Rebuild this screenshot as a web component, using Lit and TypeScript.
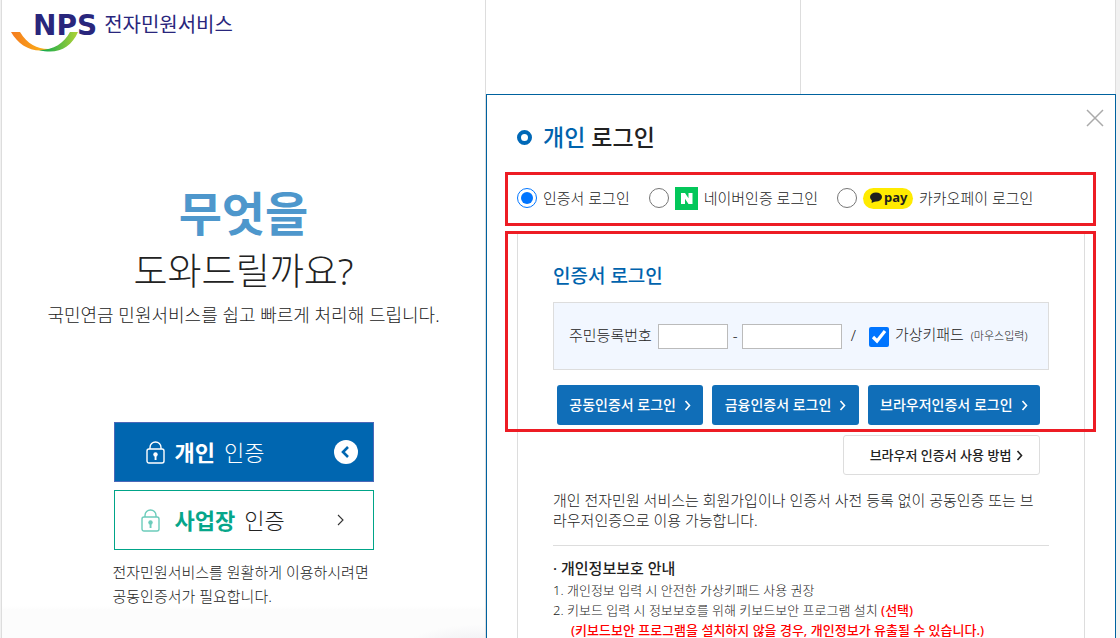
import { LitElement, html, css, svg } from "lit";
import { customElement, state } from "lit/decorators.js";

const chevron = svg`<path d="M1.5 1 L5.5 5.5 L1.5 10" fill="none" stroke="currentColor" stroke-width="1.6" />`;
const lock = svg`
  <rect x="1" y="8" width="17" height="14" rx="2" fill="none" stroke="currentColor" stroke-width="1.4" />
  <path d="M4 8 V6.5 A5.5 5.5 0 0 1 15 6.5 V8" fill="none" stroke="currentColor" stroke-width="1.4" />
  <circle cx="9.5" cy="13.4" r="2.2" fill="currentColor" />
  <rect x="8.6" y="14" width="1.9" height="5" fill="currentColor" />`;

@customElement("app-root")
export class AppRoot extends LitElement {
  @state() private method = "cert";

  static styles = css`
    :host {
      display: block;
      box-sizing: border-box;
      height: 100vh;
      overflow: hidden;
      background: #f1f1f1;
      color: #222;
      font: 300 15px/20px "Noto Sans", "Noto Sans CJK KR", sans-serif;
    }
    *, *::before, *::after { box-sizing: border-box; }
    h1, h2, h3, p, ol, fieldset { margin: 0; padding: 0; border: 0; font-size: inherit; font-weight: inherit; }
    button { font: inherit; cursor: pointer; }
    a { color: inherit; text-decoration: none; }
    svg { display: block; flex: none; }
    .page {
      display: grid;
      grid-template-columns: 483fr 631fr;
      height: 100%;
      margin: 0 4px 0 1px;
      background: #fff;
      border-left: 1px solid #ddd;
    }
    .intro {
      display: flex;
      flex-direction: column;
      align-items: center;
      background: radial-gradient(ellipse 88px 42px at 98% 101%, #d2d1d8, #e0dfe5 40%, #f4f4f6 70%, #fff0 100%),
        linear-gradient(#fff0 606px, #fcfcfc 610px);
    }
    .logo { display: flex; align-self: flex-start; padding: 10px 0 0 9px; height: 56px; color: #29267c; }
    .swoosh { margin: 20px -46px 0 0; }
    .nps { font: 700 28px/31px "DejaVu Sans", sans-serif; }
    .service { margin-left: 7px; font-size: 20px; line-height: 30px; font-weight: 400; }
    .big { margin-top: 125px; color: #4e97cc; font-size: 47px; line-height: 64px; font-weight: 700; }
    .help { font-size: 37px; line-height: 52px; }
    .lead { margin-top: 4px; font-size: 18px; line-height: 28px; white-space: nowrap; }
    .choices { display: grid; gap: 8px; width: 260px; margin-top: 93px; }
    .choice {
      display: flex;
      align-items: center;
      height: 60px;
      padding: 0 15px 0 31px;
      border: 1px solid #00a488;
      background: #fff;
      color: #222;
      font-size: 22px;
      line-height: 32px;
      font-weight: 300;
    }
    .choice b { margin: 0 9px 0 10px; font-weight: 700; }
    .choice svg:last-child { margin-left: auto; }
    .personal { border-color: #4b68b8; background: #0066b0; color: #fff; }
    .company { padding: 0 29px 0 26px; }
    .company b { margin-left: 15px; color: #06a68a; }
    .company .lock { color: #6cccbb; }
    .hint { width: 262px; margin-top: 10px; line-height: 24px; white-space: nowrap; }

    .side { display: grid; grid-template-rows: 94px 1fr; min-width: 0; border-left: 1px solid #ddd; }
    .tabs { display: grid; grid-template-columns: 1fr 1fr; }
    .tabs div { border-right: 1px solid #ddd; }
    .panel { min-height: 0; border: 1px solid #00629f; border-bottom: 0; padding: 0 19px 0 18px; overflow: hidden; }
    .head { display: flex; justify-content: space-between; height: 77px; padding: 14px 0 0 12px; }
    .title {
      display: flex;
      align-items: center;
      gap: 11px;
      height: 56px;
      font-size: 23px;
      line-height: 32px;
      font-weight: 500;
    }
    .title::before { content: ""; width: 15px; height: 15px; border: 4px solid #0068b7; border-radius: 50%; }
    .title em, .sub { color: #0063ad; font-style: normal; }
    .close { width: 18px; height: 18px; padding: 0; border: 0; background: none; color: #aaa; margin-right: -8px; }
    .methods {
      display: flex;
      align-items: center;
      height: 54px;
      padding: 0 9px 2px;
      border: 3px solid #ed1c24;
    }
    .methods label { display: flex; align-items: center; margin-right: 19px; white-space: nowrap; }
    input[type="radio"], input[type="checkbox"] { flex: none; width: 20px; height: 20px; margin: 0 6px 0 0; accent-color: #0075ff; }
    .mark { margin-right: 6px; }
    .naver { width: 23px; height: 23px; background: #03c75a; }
    .pay {
      display: flex;
      align-items: center;
      gap: 2px;
      width: 50px;
      height: 21px;
      padding: 0 0 2px 7px;
      border-radius: 11px;
      background: #ffeb00;
      color: #1e1e1e;
      font: 700 13px/18px "Noto Sans", sans-serif;
    }
    .frame { margin: 5px 11px 0 12px; border: 1px solid #ddd; border-width: 0 1px; padding: 0 35px 20px; }
    .cert { position: relative; height: 201px; padding-top: 31px; }
    .cert::after {
      content: "";
      position: absolute;
      inset: 0 -47px 0 -48px;
      border: 3px solid #ed1c24;
      pointer-events: none;
    }
    .sub { font-size: 19px; line-height: 28px; font-weight: 500; }
    .number {
      display: flex;
      align-items: center;
      height: 68px;
      margin-top: 12px;
      padding: 0 15px 2px;
      border: 1px solid #ddd;
      background: #f2f7ff;
      white-space: nowrap;
    }
    .number input[type="text"], .number input[type="password"] {
      width: 70px;
      height: 25px;
      margin: 3px 5px 0 6px;
      border: 1px solid #bbb;
      background: #fff;
    }
    .number input[type="password"] { width: 100px; margin: 3px 9px 0 4px; }
    .number input[type="checkbox"] { margin: 3px 6px 0 13px; }
    .number small { margin-left: 3px; font-size: 11px; }
    .logins { display: flex; gap: 9px; padding: 15px 9px 0 4px; }
    .login {
      display: flex;
      align-items: center;
      justify-content: center;
      gap: 8px;
      flex: 146 1 0;
      height: 40px;
      padding: 0;
      border: 0;
      border-radius: 3px;
      background: #106eb8;
      color: #fff;
      font-size: 14px;
      font-weight: 500;
      white-space: nowrap;
    }
    .login.wide { flex-grow: 172; }
    .guide {
      display: flex;
      align-items: center;
      justify-content: center;
      gap: 5px;
      width: 197px;
      height: 40px;
      margin: 3px 9px 0 auto;
      padding-left: 10px;
      border: 1px solid #ddd;
      border-radius: 3px;
      color: #222;
      font-size: 13px;
      font-weight: 500;
      white-space: nowrap;
    }
    .about { margin-top: 15px; padding-bottom: 15px; border-bottom: 1px solid #ddd; white-space: nowrap; }
    .privacy { margin-top: 12px; font-weight: 500; }
    .rules { list-style-position: inside; margin-top: 2px; font-size: 13px; white-space: nowrap; }
    .rules strong { color: #f00; font-weight: 500; }
    .rules .warn { display: block; padding-left: 18px; }
  `;

  private methodOption(id: string, label: string, mark: unknown = "") {
    return html`<label>
      <input type="radio" name="method" .checked=${this.method === id} @change=${() => (this.method = id)} />
      ${mark}${label}
    </label>`;
  }

  private arrow() {
    return html`<svg width="7" height="11" viewBox="0 0 7 11" aria-hidden="true">${chevron}</svg>`;
  }

  render() {
    return html`
      <div class="page">
        <main class="intro">
          <a class="logo" href="#">
            <svg class="swoosh" width="68" height="23" viewBox="0 0 68 23" aria-hidden="true">
              <defs>
                <linearGradient id="o"><stop stop-color="#f47b20" /><stop offset="1" stop-color="#fdb913" /></linearGradient>
                <linearGradient id="g"><stop stop-color="#00a651" /><stop offset="1" stop-color="#b2d235" /></linearGradient>
              </defs>
              <path d="M0 2 H9 C17 15 28 20 40 19 C22 24 8 16 0 2Z" fill="url(#o)" />
              <path d="M67 2 H59 C53 13 43 20 28 20 C46 25 60 18 67 2Z" fill="url(#g)" />
            </svg>
            <span class="nps">NPS</span><span class="service">전자민원서비스</span>
          </a>
          <h1 class="big">무엇을</h1>
          <p class="help">도와드릴까요?</p>
          <p class="lead">국민연금 민원서비스를 쉽고 빠르게 처리해 드립니다.</p>
          <div class="choices">
            <button class="choice personal">
              <svg width="19" height="23" viewBox="0 0 19 23" aria-hidden="true">${lock}</svg>
              <b>개인</b>인증
              <svg width="24" height="24" viewBox="0 0 24 24" aria-hidden="true">
                <circle cx="12" cy="12" r="12" fill="#fff" />
                <path d="M14 7 L9 12 L14 17" fill="none" stroke="#0066b0" stroke-width="2.6" />
              </svg>
            </button>
            <button class="choice company">
              <svg class="lock" width="19" height="23" viewBox="0 0 19 23" aria-hidden="true">${lock}</svg>
              <b>사업장</b>인증
              <svg width="7" height="12" viewBox="0 0 7 12" aria-hidden="true">
                <path d="M1 1 L6 6 L1 11" fill="none" stroke="#333" stroke-width="1.1" />
              </svg>
            </button>
          </div>
          <p class="hint">전자민원서비스를 원활하게 이용하시려면<br />공동인증서가 필요합니다.</p>
        </main>
        <div class="side">
          <div class="tabs"><div></div><div></div></div>
          <section class="panel">
            <header class="head">
              <h2 class="title"><span><em>개인</em> 로그인</span></h2>
              <button class="close" aria-label="닫기">
                <svg width="18" height="18" viewBox="0 0 18 18"><path d="M1 1 L17 17 M17 1 L1 17" stroke="currentColor" stroke-width="1.5" /></svg>
              </button>
            </header>
            <fieldset class="methods">
              ${this.methodOption("cert", "인증서 로그인")}
              ${this.methodOption(
                "naver",
                "네이버인증 로그인",
                html`<svg class="mark naver" viewBox="0 0 23 23" aria-hidden="true">
                  <path d="M6 6 H10 L13.5 11.2 V6 H17.5 V17 H13.5 L10 11.8 V17 H6Z" fill="#fff" />
                </svg>`
              )}
              ${this.methodOption(
                "kakao",
                "카카오페이 로그인",
                html`<span class="mark pay">
                  <svg width="12" height="11" viewBox="0 0 12 11" aria-hidden="true">
                    <ellipse cx="6" cy="5" rx="6" ry="4.6" fill="currentColor" />
                    <path d="M2 7 L1.6 11 L6 9Z" fill="currentColor" />
                  </svg>pay</span>`
              )}
            </fieldset>
            <div class="frame">
              <div class="cert">
                <h3 class="sub">인증서 로그인</h3>
                <div class="number">
                  <label for="front">주민등록번호</label>
                  <input id="front" type="text" maxlength="6" />-
                  <input id="back" type="password" maxlength="7" aria-label="주민등록번호 뒷자리" />/
                  <input id="keypad" type="checkbox" checked />
                  <label for="keypad">가상키패드 <small>(마우스입력)</small></label>
                </div>
                <div class="logins">
                  <button class="login">공동인증서 로그인 ${this.arrow()}</button>
                  <button class="login">금융인증서 로그인 ${this.arrow()}</button>
                  <button class="login wide">브라우저인증서 로그인 ${this.arrow()}</button>
                </div>
              </div>
              <a class="guide" href="#">브라우저 인증서 사용 방법 ${this.arrow()}</a>
              <p class="about">개인 전자민원 서비스는 회원가입이나 인증서 사전 등록 없이 공동인증 또는 브<br />라우저인증으로 이용 가능합니다.</p>
              <h3 class="privacy">· 개인정보보호 안내</h3>
              <ol class="rules">
                <li>개인정보 입력 시 안전한 가상키패드 사용 권장</li>
                <li>키보드 입력 시 정보보호를 위해 키보드보안 프로그램 설치 <strong>(선택)</strong>
                  <strong class="warn">(키보드보안 프로그램을 설치하지 않을 경우, 개인정보가 유출될 수 있습니다.)</strong></li>
              </ol>
            </div>
          </section>
        </div>
      </div>
    `;
  }
}
